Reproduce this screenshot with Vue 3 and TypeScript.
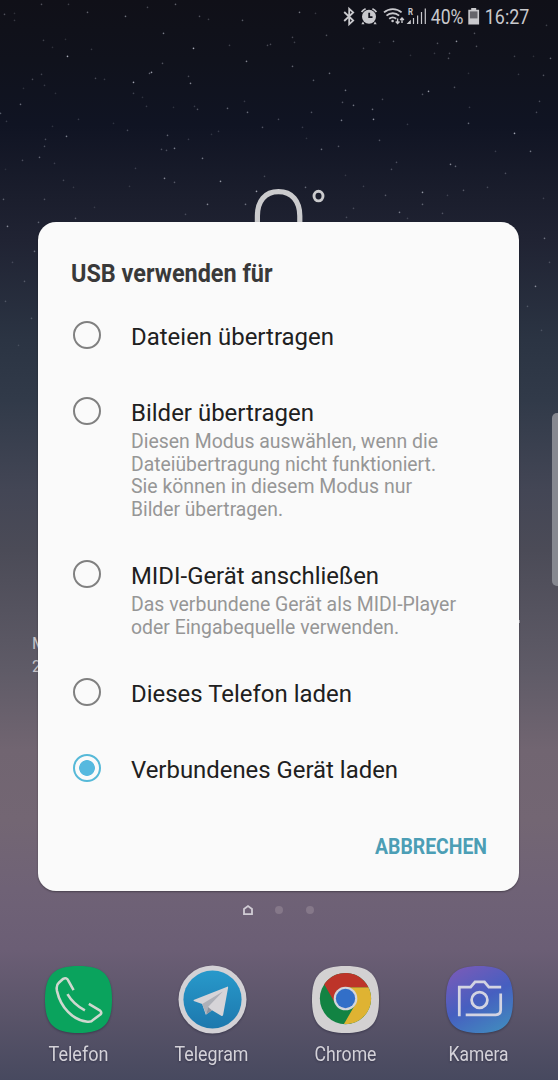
<script setup lang="ts">
import { ref } from 'vue'

interface Option {
  label: string
  width: number
  lines: { text: string; width: number }[]
}

const options: Option[] = [
  { label: 'Dateien übertragen', width: 203, lines: [] },
  {
    label: 'Bilder übertragen',
    width: 183,
    lines: [
      { text: 'Diesen Modus auswählen, wenn die', width: 307 },
      { text: 'Dateiübertragung nicht funktioniert.', width: 305 },
      { text: 'Sie können in diesem Modus nur', width: 281 },
      { text: 'Bilder übertragen.', width: 152 },
    ],
  },
  {
    label: 'MIDI-Gerät anschließen',
    width: 248,
    lines: [
      { text: 'Das verbundene Gerät als MIDI-Player', width: 325 },
      { text: 'oder Eingabequelle verwenden.', width: 268 },
    ],
  },
  { label: 'Dieses Telefon laden', width: 221, lines: [] },
  { label: 'Verbundenes Gerät laden', width: 267, lines: [] },
]
const selected = ref(4)

const apps = [
  { name: 'Telefon', width: 60 },
  { name: 'Telegram', width: 74 },
  { name: 'Chrome', width: 62 },
  { name: 'Kamera', width: 60 },
]

// x, y, opacity
const stars: [number, number, number][] = [
  [41, 4, 0.4], [68, 4, 0.3], [87, 12, 0.5], [125, 16, 0.6], [147, 7, 0.35], [175, 4, 0.5], [199, 16, 0.4], [208, 19, 0.3],
  [4, 14, 0.4], [14, 13, 0.2], [14, 20, 0.25], [242, 20, 0.45], [299, 12, 0.6], [315, 13, 0.25], [546, 25, 0.3], [163, 33, 0.65],
  [193, 48, 0.95], [67, 56, 0.95], [43, 40, 0.3], [52, 47, 0.2], [65, 39, 0.2], [91, 49, 0.25], [162, 63, 0.4], [246, 61, 0.7],
  [292, 66, 0.5], [151, 72, 0.85], [149, 73, 0.5], [133, 82, 0.9], [95, 78, 0.35], [104, 79, 0.25], [32, 79, 0.35], [41, 74, 0.3],
  [44, 85, 0.25], [188, 76, 0.35], [190, 83, 0.7], [229, 45, 0.3], [267, 45, 0.35], [270, 44, 0.35], [292, 37, 0.35], [294, 42, 0.3],
  [326, 35, 0.4], [363, 48, 0.35], [379, 42, 0.25], [393, 41, 0.45], [437, 43, 0.4], [456, 41, 0.8], [474, 33, 0.4], [476, 46, 0.4],
  [434, 53, 0.25], [449, 53, 0.35], [448, 58, 0.4], [514, 56, 0.3], [533, 56, 0.2], [550, 58, 0.5], [410, 55, 0.2], [329, 73, 0.55],
  [313, 80, 0.45], [345, 90, 0.6], [428, 91, 0.85], [422, 94, 0.4], [454, 87, 0.4], [468, 73, 0.2], [518, 74, 0.25], [543, 75, 0.4],
  [539, 101, 0.35], [536, 112, 0.35], [20, 104, 0.55], [0, 113, 0.45], [6, 121, 0.25], [23, 88, 0.2], [55, 93, 0.2], [133, 93, 0.3],
  [142, 97, 0.2], [146, 106, 0.25], [173, 107, 0.2], [194, 106, 0.25], [197, 109, 0.4], [227, 108, 0.5], [247, 112, 0.55],
  [244, 101, 0.25], [278, 119, 0.35], [262, 127, 0.4], [311, 112, 0.4], [342, 102, 0.4], [353, 105, 0.6], [341, 120, 0.65],
  [372, 109, 0.55], [373, 119, 0.8], [382, 99, 0.35], [407, 124, 0.25], [469, 107, 0.25], [468, 123, 0.55], [514, 133, 0.9],
  [302, 127, 0.25], [66, 136, 0.65], [45, 139, 0.35], [44, 146, 0.35], [39, 157, 0.5], [22, 160, 0.35], [52, 126, 0.2],
  [78, 119, 0.25], [113, 123, 0.2], [127, 130, 0.35], [167, 135, 0.5], [161, 149, 0.35], [166, 150, 0.35], [174, 148, 0.65],
  [202, 158, 0.6], [188, 139, 0.25], [211, 134, 0.2], [218, 131, 0.25], [321, 149, 0.55], [338, 146, 0.4], [379, 140, 0.4],
  [306, 138, 0.2], [396, 162, 0.35], [391, 169, 0.35], [450, 164, 0.7], [455, 166, 0.5], [495, 151, 0.25], [530, 151, 0.6],
  [505, 173, 0.35], [487, 187, 0.3], [5, 169, 0.15], [54, 163, 0.25], [63, 180, 0.3], [73, 187, 0.2], [135, 168, 0.25],
  [164, 178, 0.7], [174, 182, 0.4], [220, 181, 0.8], [264, 176, 0.3], [256, 191, 0.85], [281, 191, 0.5], [305, 187, 0.5],
  [345, 175, 0.2], [363, 186, 0.25], [422, 192, 0.8], [422, 204, 0.45], [385, 195, 0.4], [463, 190, 0.4], [447, 195, 0.25],
  [399, 212, 0.6], [442, 213, 0.35], [353, 208, 0.3], [346, 217, 0.3], [407, 218, 0.25], [207, 204, 0.7], [245, 204, 0.55],
  [3, 199, 0.45], [44, 199, 0.35], [7, 226, 0.7], [38, 222, 0.45], [75, 218, 0.4], [108, 224, 0.6], [67, 233, 0.4],
  [129, 186, 0.2], [94, 207, 0.2], [185, 214, 0.3], [544, 238, 0.55], [543, 198, 0.25], [34, 251, 0.5], [12, 262, 0.25],
  [24, 281, 0.35], [5, 301, 0.3], [31, 318, 0.3], [535, 286, 0.7], [549, 262, 0.3], [527, 306, 0.3], [541, 330, 0.25], [18, 345, 0.2],
]
</script>

<template>
  <div class="screen">
    <svg class="sky" viewBox="0 0 558 400">
      <circle v-for="([x, y, o], i) in stars" :key="i" :cx="x + 0.5" :cy="y + 0.4" r="0.8" fill="#ccd0dc" :opacity="o * 0.85" />
    </svg>

    <header class="status">
      <svg class="status-icons" width="187" height="30" viewBox="0 0 187 30">
        <path d="M2.2 12 11.2 20.6 7.2 24.2V8.8L11.2 12.4 2.2 21" fill="none" stroke="#c9c9cd" stroke-width="1.8" />
        <g fill="#c9c9cd">
          <circle cx="27" cy="16.8" r="7" />
          <path d="M21 21.5l-1.7 2.8h3.2zM33 21.5l1.7 2.8h-3.2z" />
          <path d="M19.6 12a9 9 0 0 1 4-3.2M34.4 12a9 9 0 0 0-4-3.2" fill="none" stroke="#c9c9cd" stroke-width="1.7" />
          <path d="M27.2 12.8v4.4h3.3" fill="none" stroke="#11121b" stroke-width="1.8" />
        </g>
        <g fill="none" stroke="#c9c9cd" stroke-width="1.8">
          <path d="M42 12.4a13.2 13.2 0 0 1 17.6 0M44.5 15.7a9.3 9.3 0 0 1 12.6 0M47.2 18.8a5.4 5.4 0 0 1 7 0" />
          <path d="M55.6 18.5v5M53.7 21.5l1.9 2 1.9-2M60 23v-5M58.1 20l1.9-2 1.9 2" stroke-width="1.4" />
        </g>
        <circle cx="50.6" cy="21" r="1.3" fill="#c9c9cd" />
        <text x="66" y="15.2" class="roaming" textLength="5" lengthAdjust="spacingAndGlyphs">R</text>
        <path d="M66 23.5h2.2v-2.2zM71.5 24v-6M75.6 24v-8.6M79.5 24V12M83.3 24V8.5" fill="#c9c9cd" stroke="#c9c9cd" stroke-width="1.2" />
        <text x="88.8" y="24.2" class="clock" textLength="32.7" lengthAdjust="spacingAndGlyphs">40%</text>
        <path d="M129.2 8h5v1.8h2.9v14.7h-10.8V9.8h2.9z" fill="#c9c9cd" />
        <path d="M127.9 11.4h7.6v7h-7.6z" fill="#65656b" />
        <text x="142.8" y="24.2" class="clock" textLength="44.5" lengthAdjust="spacingAndGlyphs">16:27</text>
      </svg>
    </header>

    <svg class="weather" width="80" height="60" viewBox="0 0 80 60">
      <path d="M7.4 60V32C7.4 17 15 7.7 28.5 7.7S49.8 17 49.8 32V60" fill="none" stroke="#cbcbcd" stroke-width="5.2" />
      <ellipse cx="68.5" cy="12.1" rx="4.5" ry="4.8" fill="none" stroke="#cbcbcd" stroke-width="2.9" />
    </svg>

    <div class="date-widget"><span>Mo.</span><span>2. Apr</span></div>
    <div class="widget-edge"></div>
    <div class="edge-handle"></div>

    <section class="dialog">
      <svg class="heading" width="210" height="36">
        <text x="0" y="25.3" textLength="201.5" lengthAdjust="spacingAndGlyphs">USB verwenden für</text>
      </svg>
      <div class="options">
        <div v-for="(o, i) in options" :key="o.label" class="option" @click="selected = i">
          <span class="radio" :class="{ on: selected === i }"></span>
          <div class="copy">
            <svg class="label" width="330" height="28">
              <text x="0" y="22" :textLength="o.width" lengthAdjust="spacingAndGlyphs">{{ o.label }}</text>
            </svg>
            <svg v-for="l in o.lines" :key="l.text" class="line" width="340" height="22.5">
              <text x="0" y="17.6" :textLength="l.width" lengthAdjust="spacingAndGlyphs">{{ l.text }}</text>
            </svg>
          </div>
        </div>
      </div>
      <svg class="cancel" width="112" height="30">
        <text x="0" y="21.6" textLength="112" lengthAdjust="spacingAndGlyphs">ABBRECHEN</text>
      </svg>
    </section>

    <footer class="home">
      <div class="pager">
        <svg width="12" height="12" viewBox="0 0 12 12">
          <path d="M2 10.2V5L6 2l4 3v5.2z" fill="none" stroke="#d0ccd4" stroke-width="1.8" />
        </svg>
        <i></i><i></i>
      </div>
      <div class="dock">
        <div v-for="(a, i) in apps" :key="a.name" class="app">
          <svg v-if="i === 0" class="icon" viewBox="0 0 70 70">
            <path class="tile" d="M35 1C60 1 69 10 69 35S60 69 35 69 1 60 1 35 10 1 35 1z" fill="#0aa35d" />
            <path d="M30 25.5 24.8 16Q22.8 12.2 19.5 14L15 18Q12 20.5 13.2 26.5C17 43 29 56 44 57.5Q48 58 50 55.5L57.5 50Q59 48 56.5 46L45.5 39.5M23.8 29.5Q30 40 41.5 46" fill="none" stroke="#cfd8cf" stroke-width="2.6" stroke-linejoin="round" />
          </svg>
          <svg v-else-if="i === 1" class="icon" viewBox="0 0 70 70">
            <defs>
              <linearGradient id="tg" x1="0" y1="0" x2="0" y2="1"><stop stop-color="#2899cb" /><stop offset="1" stop-color="#1d78ad" /></linearGradient>
            </defs>
            <circle class="tile" cx="35" cy="35" r="34.5" fill="#d3d1d5" />
            <circle cx="35" cy="35" r="29.5" fill="url(#tg)" />
            <path d="M15.8 35.5 50 22q1-.4.8 1L45.8 50.5q-.5 1.8-2 1L34.5 46l-6.3 4.5L24.5 39.5 16 36.5z" fill="#d6d4d8" />
            <path d="M24.5 39.5 45.5 27 30.5 42.5l-1.8 7.8z" fill="#aeb0b8" />
            <path d="M28.7 50.3 34.5 46l-4-3.5z" fill="#8f949f" />
          </svg>
          <svg v-else-if="i === 2" class="icon" viewBox="0 0 70 70">
            <path class="tile" d="M35 1C60 1 69 10 69 35S60 69 35 69 1 60 1 35 10 1 35 1z" fill="#d3d1d2" />
            <circle cx="35" cy="34" r="26" fill="#128343" />
            <path d="M35 22.5h23.3A26 26 0 0 1 33.4 59.9L45 39.8z" fill="#dfb332" />
            <path d="M13.4 19.6A26 26 0 0 1 58.3 22.5H35L25 39.8z" fill="#bd3429" />
            <circle cx="35" cy="34" r="12" fill="#d3d5dc" />
            <circle cx="35" cy="34" r="9.8" fill="#326fc8" />
          </svg>
          <svg v-else class="icon" viewBox="0 0 70 70">
            <defs>
              <linearGradient id="cam" x1=".25" y1="0" x2=".8" y2="1">
                <stop stop-color="#755bb9" /><stop offset=".5" stop-color="#465fc0" /><stop offset="1" stop-color="#418abe" />
              </linearGradient>
            </defs>
            <path class="tile" d="M35 1C60 1 69 10 69 35S60 69 35 69 1 60 1 35 10 1 35 1z" fill="url(#cam)" />
            <g fill="none" stroke="#d3d4e2" stroke-width="2.8">
              <path d="M14.5 52V22.5H26l4.5-5.5h9.5l4.5 5.5H57M56.5 29V45.5q0 5-5 5H21" />
              <circle cx="35" cy="35.5" r="8" />
            </g>
          </svg>
          <svg class="app-name" width="90" height="26">
            <text :x="44.5 - a.width / 2" y="19.5" :textLength="a.width" lengthAdjust="spacingAndGlyphs">{{ a.name }}</text>
          </svg>
        </div>
      </div>
    </footer>
  </div>
</template>

<style>
body { margin: 0; background: #48495f; }
</style>

<style scoped>
.screen {
  position: relative;
  display: flex;
  flex-direction: column;
  justify-content: space-between;
  width: 558px;
  height: 1080px;
  overflow: hidden;
  font-family: Roboto, "Liberation Sans", sans-serif;
  background: linear-gradient(#101018 0, #10121c 60px, #101423 125px, #1b1e2d 200px, #202333 240px, #2b3443 340px, #313a49 400px, #434655 490px, #4b4b57 550px, #5f5b67 670px, #716571 750px, #736673 820px, #6f6276 890px, #6b5e75 950px, #5a5469 1015px, #47495f 1080px);
}
.sky { position: absolute; left: 0; top: 0; width: 558px; height: 400px; }
.status { position: relative; display: flex; justify-content: flex-end; padding-right: 29px; }
.roaming { font-size: 8.5px; font-weight: 700; fill: #c9c9cd; }
.clock { font-size: 20.8px; fill: #c9c9cd; }
.weather { position: absolute; left: 250px; top: 184px; }
.date-widget {
  position: absolute;
  left: 32px;
  top: 631.5px;
  display: flex;
  flex-direction: column;
  font-size: 16px;
  line-height: 23.5px;
  color: #c5c3c9;
}
.widget-edge {
  position: absolute;
  left: 518px;
  top: 620px;
  width: 2px;
  height: 3px;
  background: #aaa8b0;
}
.edge-handle {
  position: absolute;
  left: 552px;
  top: 413px;
  width: 12px;
  height: 173px;
  border-radius: 5px;
  background: #868890;
}
.dialog {
  position: absolute;
  left: 38px;
  top: 222px;
  display: flex;
  flex-direction: column;
  box-sizing: border-box;
  width: 481px;
  height: 669px;
  padding: 35px 32px 29px 33px;
  border-radius: 18px;
  background: #fafafa;
  box-shadow: 0 1px 2px rgba(0, 0, 0, 0.35);
}
svg { display: block; flex: none; overflow: visible; }
.heading text { font-size: 26.5px; font-weight: 700; fill: #393939; }
.options { display: flex; flex-direction: column; gap: 42px; margin-top: 30px; }
.option { display: flex; min-height: 34px; cursor: pointer; }
.radio {
  box-sizing: border-box;
  width: 28px;
  height: 28px;
  margin: -2px 30px 0 2px;
  border: 2px solid #808080;
  border-radius: 50%;
  flex: none;
}
.radio.on { border-color: #56b9d8; background: radial-gradient(circle, #56b9df 7.5px, transparent 8.2px); }
.copy { display: flex; flex-direction: column; }
.label { margin-bottom: 3px; }
.label text { font-size: 24.5px; fill: #202020; }
.line text { font-size: 20px; fill: #969696; }
.cancel { margin-top: auto; align-self: flex-end; }
.cancel text { font-size: 22.5px; font-weight: 700; fill: #4c9eb5; }
.home { display: flex; flex-direction: column; padding: 0 12px 13px; }
.pager { display: flex; align-items: center; justify-content: center; gap: 23px; margin: 0 2px 49px 0; }
.pager svg { margin-right: -1.5px; }
.pager i { width: 8px; height: 8px; border-radius: 50%; background: #857889; }
.dock { display: flex; }
.app { display: flex; flex: 1; flex-direction: column; align-items: center; gap: 7px; }
.icon { width: 69px; height: 69px; }
.tile { filter: drop-shadow(0 1px 1px rgba(20, 20, 40, 0.4)); }
.app-name text { font-size: 20.8px; fill: #d4d2d9; filter: drop-shadow(0 1px 1px rgba(20, 20, 40, 0.4)); }
</style>
